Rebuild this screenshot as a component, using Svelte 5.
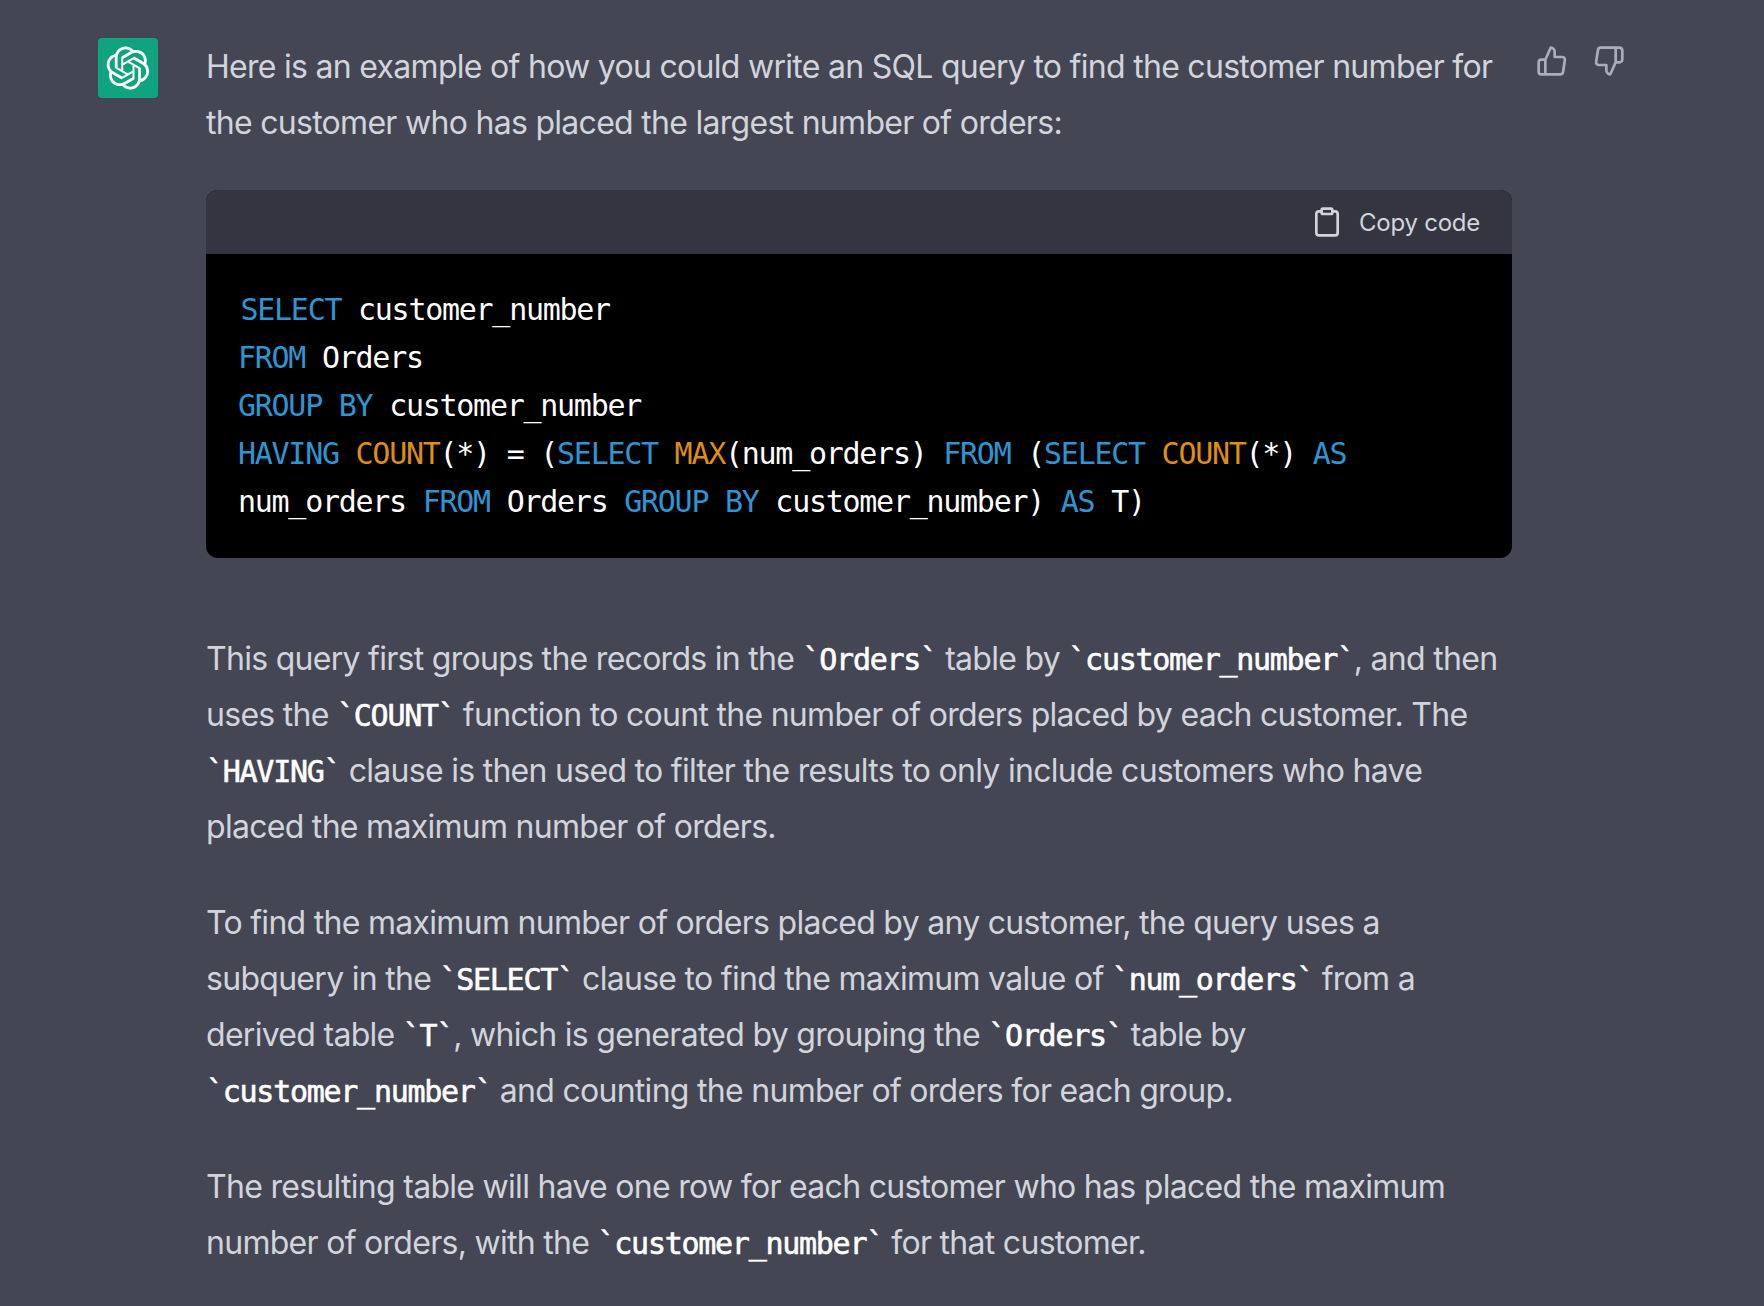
<script>
    // code tokens: k = keyword, f = function, plain text otherwise
    const codeLines = [
        [['k', 'SELECT'], ['', ' customer_number']],
        [['k', 'FROM'], ['', ' Orders']],
        [['k', 'GROUP BY'], ['', ' customer_number']],
        [['k', 'HAVING'], ['', ' '], ['f', 'COUNT'], ['', '(*) = ('], ['k', 'SELECT'], ['', ' '], ['f', 'MAX'], ['', '(num_orders) '], ['k', 'FROM'], ['', ' ('], ['k', 'SELECT'], ['', ' '], ['f', 'COUNT'], ['', '(*) '], ['k', 'AS']],
        [['', 'num_orders '], ['k', 'FROM'], ['', ' Orders '], ['k', 'GROUP BY'], ['', ' customer_number) '], ['k', 'AS'], ['', ' T)']]
    ];

    const logo = 'M37.5324 16.8707C37.9808 15.5241 38.1363 14.0974 37.9886 12.6859C37.8409 11.2744 37.3934 9.91076 36.676 8.68622C35.6126 6.83404 33.9882 5.3676 32.0373 4.4985C30.0864 3.62941 27.9098 3.40259 25.8215 3.85078C24.8796 2.7893 23.7219 1.94125 22.4257 1.36341C21.1295 0.785575 19.7249 0.491269 18.3058 0.500197C16.1708 0.495044 14.0893 1.16803 12.3614 2.42214C10.6335 3.67624 9.34853 5.44666 8.6917 7.47815C7.30085 7.76286 5.98686 8.3414 4.8377 9.17505C3.68854 10.0087 2.73073 11.0782 2.02839 12.312C0.956464 14.1591 0.498905 16.2988 0.721698 18.4228C0.944492 20.5467 1.83612 22.5449 3.268 24.1293C2.81966 25.4759 2.66413 26.9026 2.81182 28.3141C2.95951 29.7256 3.40701 31.0892 4.12437 32.3138C5.18791 34.1659 6.8123 35.6322 8.76321 36.5013C10.7141 37.3704 12.8907 37.5973 14.9789 37.1492C15.9208 38.2107 17.0786 39.0587 18.3747 39.6366C19.6709 40.2144 21.0755 40.5087 22.4946 40.4998C24.6307 40.5054 26.7133 39.8321 28.4418 38.5772C30.1704 37.3223 31.4556 35.5506 32.1119 33.5179C33.5027 33.2332 34.8167 32.6547 35.9659 31.821C37.115 30.9874 38.0728 29.9178 38.7752 28.684C39.8458 26.8371 40.3023 24.6979 40.0789 22.5748C39.8556 20.4517 38.9639 18.4544 37.5324 16.8707ZM22.4978 37.8849C20.7443 37.8874 19.0459 37.2733 17.6994 36.1501C17.7601 36.117 17.8666 36.0586 17.936 36.0161L25.9004 31.4156C26.1003 31.3019 26.2663 31.137 26.3813 30.9378C26.4964 30.7386 26.5563 30.5124 26.5549 30.2825V19.0542L29.9213 20.998C29.9389 21.0068 29.9541 21.0198 29.9656 21.0359C29.977 21.052 29.9842 21.0707 29.9867 21.0902V30.3889C29.9842 32.375 29.1946 34.2791 27.7909 35.6841C26.3872 37.0892 24.4838 37.8806 22.4978 37.8849ZM6.39227 31.0064C5.51397 29.4888 5.19742 27.7107 5.49804 25.9832C5.55718 26.0187 5.66048 26.0818 5.73461 26.1244L13.699 30.7248C13.8975 30.8408 14.1233 30.902 14.3532 30.902C14.583 30.902 14.8088 30.8408 15.0073 30.7248L24.731 25.1103V28.9979C24.7321 29.0177 24.7283 29.0376 24.7199 29.0556C24.7115 29.0736 24.6988 29.0893 24.6829 29.1012L16.6317 33.7497C14.9096 34.7416 12.8643 35.0097 10.9447 34.4954C9.02506 33.9811 7.38785 32.7263 6.39227 31.0064ZM4.29707 13.6194C5.17156 12.0998 6.55279 10.9364 8.19885 10.3327C8.19885 10.4013 8.19491 10.5228 8.19491 10.6071V19.808C8.19351 20.0378 8.25334 20.2638 8.36823 20.4629C8.48312 20.6619 8.64893 20.8267 8.84863 20.9404L18.5723 26.5542L15.206 28.4979C15.1894 28.5089 15.1703 28.5155 15.1505 28.5173C15.1307 28.5191 15.1107 28.516 15.0924 28.5082L7.04046 23.8557C5.32135 22.8601 4.06716 21.2235 3.55289 19.3046C3.03862 17.3858 3.30624 15.3413 4.29707 13.6194ZM31.955 20.0556L22.2312 14.4411L25.5976 12.4981C25.6142 12.4872 25.6333 12.4805 25.6531 12.4787C25.6729 12.4769 25.6928 12.4801 25.7111 12.4879L33.7631 17.1364C34.9967 17.849 36.0017 18.8982 36.6606 20.1613C37.3194 21.4244 37.6047 22.849 37.4832 24.2684C37.3617 25.6878 36.8382 27.0432 35.9743 28.1759C35.1103 29.3086 33.9415 30.1717 32.6047 30.6641C32.6047 30.5947 32.6047 30.4733 32.6047 30.3889V21.188C32.6066 20.9586 32.5474 20.7328 32.4332 20.5338C32.319 20.3348 32.154 20.1698 31.955 20.0556ZM35.3055 15.0128C35.2464 14.9765 35.1431 14.9142 35.069 14.8717L27.1045 10.2712C26.906 10.1554 26.6803 10.0943 26.4504 10.0943C26.2206 10.0943 25.9948 10.1554 25.7963 10.2712L16.0726 15.8858V11.9982C16.0715 11.9783 16.0753 11.9585 16.0837 11.9405C16.0921 11.9225 16.1048 11.9068 16.1207 11.8949L24.1719 7.25025C25.4053 6.53903 26.8158 6.19376 28.2383 6.25482C29.6608 6.31589 31.0364 6.78077 32.2044 7.59508C33.3723 8.40939 34.2842 9.53945 34.8334 10.8531C35.3826 12.1667 35.5464 13.6095 35.3055 15.0128ZM14.2424 21.9419L10.8752 19.9981C10.8576 19.9893 10.8423 19.9763 10.8309 19.9602C10.8195 19.9441 10.8122 19.9254 10.8098 19.9058V10.6071C10.8107 9.18295 11.2173 7.78848 11.9819 6.58696C12.7466 5.38544 13.8377 4.42659 15.1275 3.82264C16.4173 3.21869 17.8524 2.99464 19.2649 3.1767C20.6775 3.35876 22.0089 3.93941 23.1034 4.85067C23.0427 4.88379 22.937 4.94215 22.8668 4.98473L14.9024 9.58517C14.7025 9.69878 14.5366 9.86356 14.4215 10.0626C14.3065 10.2616 14.2466 10.4877 14.2479 10.7175L14.2424 21.9419ZM16.071 17.9991L20.4018 15.4978L24.7325 17.9975V22.9985L20.4018 25.4983L16.071 22.9985V17.9991Z';
</script>

<div class="message">
    <div class="avatar">
        <svg viewBox="0 0 41 41" width="44" height="44" fill="#fff"><path d={logo} /></svg>
    </div>

    <div class="content">
        <p>Here is an example of how you could write an SQL query to find the customer number for the customer who has placed the largest number of orders:</p>

        <div class="codeblock">
            <div class="codehead">
                <svg class="clip" viewBox="0 0 24 24" width="32" height="32" fill="none" stroke="currentColor" stroke-width="2" stroke-linecap="round" stroke-linejoin="round">
                    <path d="M16 4h2a2 2 0 0 1 2 2v14a2 2 0 0 1-2 2H6a2 2 0 0 1-2-2V6a2 2 0 0 1 2-2h2" />
                    <rect x="8" y="2" width="8" height="4" rx="1" ry="1" />
                </svg>
                <span class="copy">Copy code</span>
            </div>
            <pre>{#each codeLines as line, i}{#each line as tok}<span class={tok[0]}>{tok[1]}</span>{/each}{i < codeLines.length - 1 ? '\n' : ''}{/each}</pre>
        </div>

        <p>This query first groups the records in the <code>`Orders`</code> table by <code>`customer_number`</code>, and then uses the <code>`COUNT`</code> function to count the number of orders placed by each customer. The <code>`HAVING`</code> clause is then used to filter the results to only include customers who have placed the maximum number of orders.</p>

        <p>To find the maximum number of orders placed by any customer, the query uses a subquery in the <code>`SELECT`</code> clause to find the maximum value of <code>`num_orders`</code> from a derived table <code>`T`</code>, which is generated by grouping the <code>`Orders`</code> table by <code>`customer_number`</code> and counting the number of orders for each group.</p>

        <p>The resulting table will have one row for each customer who has placed the maximum number of orders, with the <code>`customer_number`</code> for that customer.</p>
    </div>

    <div class="actions">
        <svg viewBox="0 0 24 24" width="32" height="32" fill="none" stroke="currentColor" stroke-width="2" stroke-linecap="round" stroke-linejoin="round">
            <path d="M14 9V5a3 3 0 0 0-3-3l-4 9v11h11.28a2 2 0 0 0 2-1.7l1.38-9a2 2 0 0 0-2-2.3zM7 22H4a2 2 0 0 1-2-2v-7a2 2 0 0 1 2-2h3" />
        </svg>
        <svg viewBox="0 0 24 24" width="32" height="32" fill="none" stroke="currentColor" stroke-width="2" stroke-linecap="round" stroke-linejoin="round">
            <path d="M10 15v4a3 3 0 0 0 3 3l4-9V2H5.72a2 2 0 0 0-2 1.7l-1.38 9a2 2 0 0 0 2 2.3zm7-13h2.67A2.31 2.31 0 0 1 22 4v7a2.31 2.31 0 0 1-2.33 2H17" />
        </svg>
    </div>
</div>

<style>
    :global(body) {
        background: #444654;
    }

    .message {
        display: flex;
        align-items: flex-start;
        min-height: 1306px;
        box-sizing: border-box;
        padding: 38px 0 0 98px;
        background: #444654;
        color: #d1d5db;
        font-family: Inter, "Liberation Sans", sans-serif;
        font-size: 32px;
        line-height: 56px;
        letter-spacing: -0.71px;
    }

    .avatar {
        flex: none;
        width: 60px;
        height: 60px;
        margin-right: 48px;
        border-radius: 4px;
        background: #10a37f;
        display: flex;
        align-items: center;
        justify-content: center;
    }

    .content {
        flex: none;
        width: 1306px;
        padding-top: 1px;
    }

    p {
        margin: 0 0 40px;
    }

    .codeblock {
        margin-top: -1px;
        margin-bottom: 73px;
        border-radius: 12px;
        overflow: hidden;
        background: #000;
    }

    .codehead {
        height: 64px;
        padding: 0 32px;
        background: #343541;
        display: flex;
        align-items: center;
        justify-content: flex-end;
        gap: 8px;
        font-size: 24px;
        line-height: 34px;
        letter-spacing: -0.25px;
    }

    .copy {
        padding-top: 2px;
    }

    .clip {
        margin-right: 8px;
    }

    pre {
        margin: 0;
        padding: 32px;
        color: #fff;
        font-family: "DejaVu Sans Mono", monospace;
        font-size: 30px;
        line-height: 48px;
        letter-spacing: -1.27px;
        text-indent: 2.5px;
        white-space: pre-wrap;
    }

    .k {
        color: #2e95d3;
    }

    .f {
        color: #df8e0f;
    }

    code {
        color: #fff;
        font-family: "DejaVu Sans Mono", monospace;
        font-size: 30px;
        letter-spacing: -1.27px;
        -webkit-text-stroke: 0.6px #fff;
        line-height: 1;
    }

    .actions {
        flex: none;
        display: flex;
        gap: 25px;
        margin: 7px 0 0 24px;
        color: #acacbe;
    }
</style>
